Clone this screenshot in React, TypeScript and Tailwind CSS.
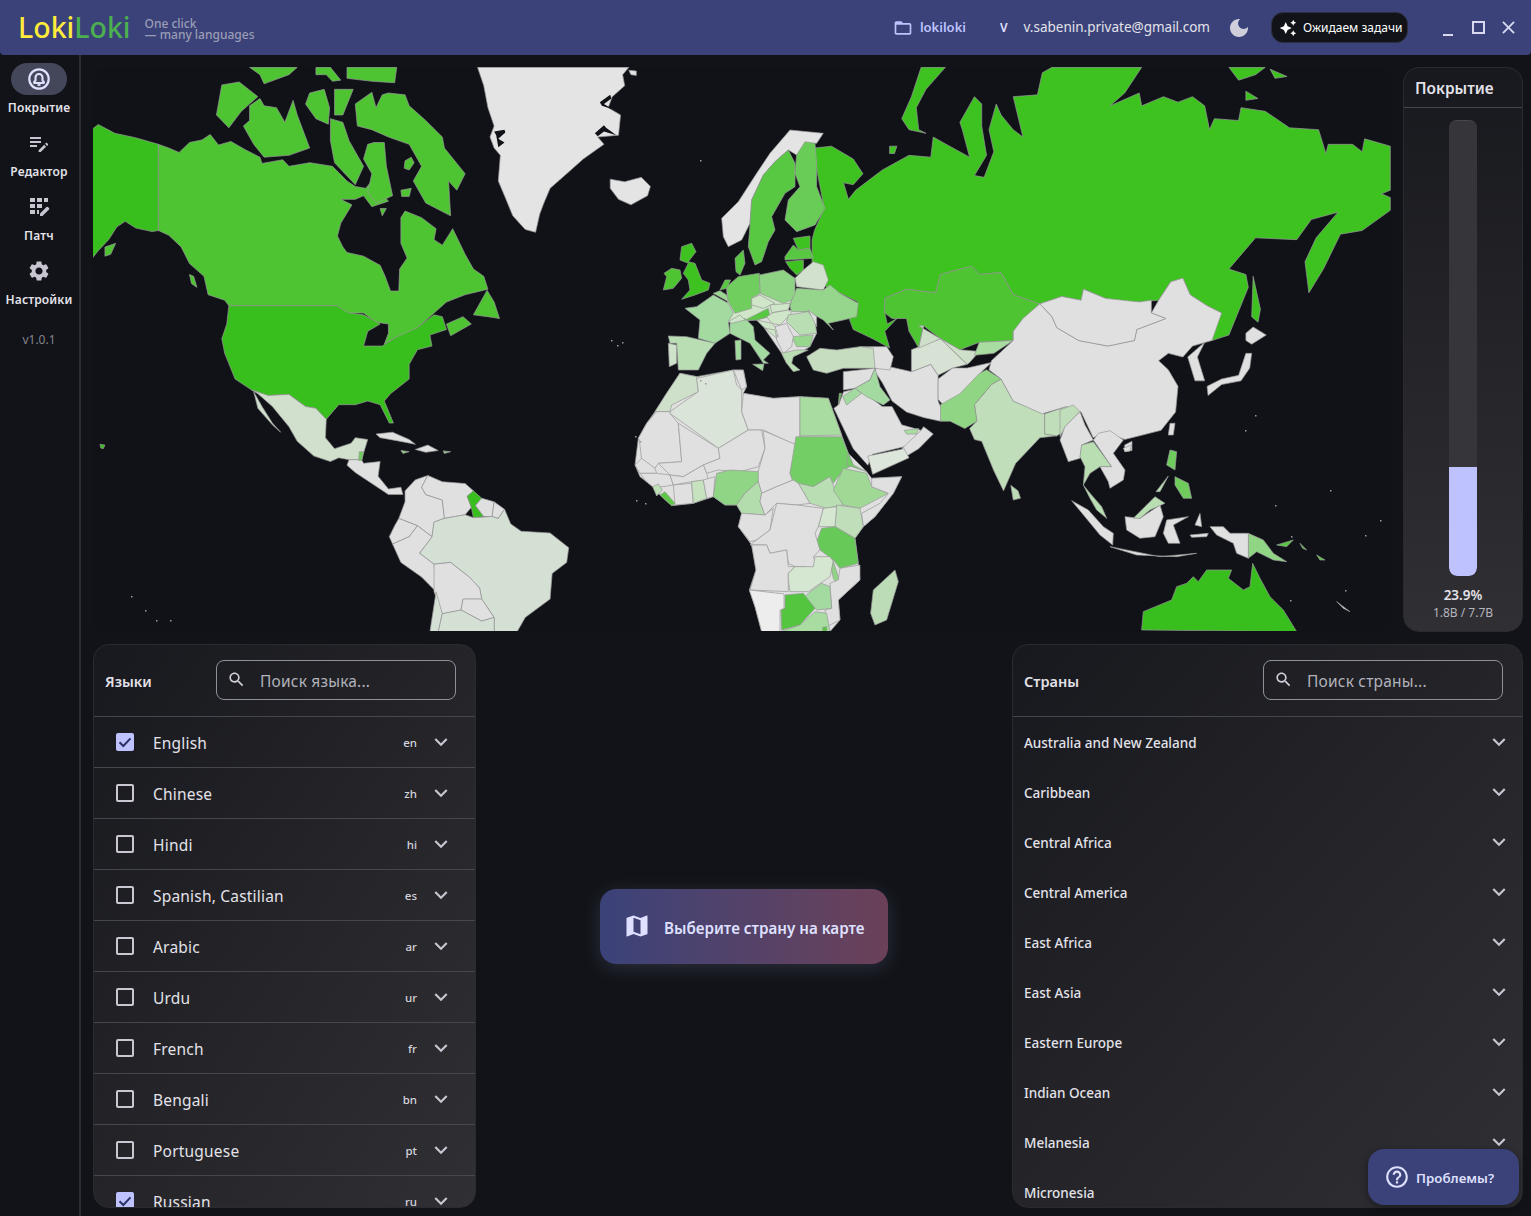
import React from "react";

type Shape = [string, string];
const R = "#3dc220", US = "#38be1d", CA = "#4ec432", G = "#e0e0e0", P = "#d5e0d5", DARK = "#101218";

const Z7: Shape[] = [
  [US, "6,188 20,176 60,200 110,212 165,230 165,465 150,468 110,458 85,440 65,455 45,490 20,520 6,540"],
  [CA, "165,230 190,240 215,252 240,225 270,218 290,203 310,232 340,222 375,245 410,265 415,282 465,272 480,290 530,280 585,290 620,330 640,345 665,350 680,330 690,345 720,385 680,400 660,370 640,380 605,380 632,395 605,445 597,480 610,510 620,525 660,535 700,560 712,590 725,630 745,630 747,570 765,540 750,500 750,430 760,412 800,430 835,460 830,490 850,505 875,460 905,530 925,570 950,590 960,625 905,640 860,660 830,690 790,730 770,745 740,755 710,775 720,745 720,720 690,715 660,690 620,690 595,670 335,670 325,655 285,640 275,590 240,555 220,510 190,478 165,465"],
  [CA, "958,628 925,695 960,700 988,705 975,660"],
  [CA, "860,720 900,700 920,720 870,752"],
  [CA, "720,90 760,95 770,125 810,165 850,210 855,240 905,310 885,355 865,330 870,425 810,390 780,330 800,290 770,230 720,210 680,190 645,180 640,120 680,88 690,130 705,95"],
  [CA, "385,125 410,105 420,125 450,130 470,170 490,110 500,150 530,240 480,260 420,265 395,230 370,180 385,165"],
  [CA, "318,68 360,60 405,100 365,140 335,185 305,150"],
  [CA, "530,90 565,80 578,130 575,175 545,160 520,120"],
  [CA, "590,80 635,80 610,150 590,150"],
  [CA, "385,20 500,20 480,40 420,65 410,40"],
  [CA, "545,20 580,20 605,55 585,58 570,40 545,40"],
  [CA, "620,20 740,20 735,62 680,58 620,50"],
  [CA, "580,160 610,170 625,220 660,290 640,340 590,280 580,220"],
  [CA, "685,225 710,225 715,290 730,370 690,390 670,360 680,310 660,270 670,230"],
  [CA, "760,275 775,265 782,280 770,300 758,295"],
  [CA, "750,355 775,350 770,372 752,372"],
  [CA, "700,405 715,405 705,425"],
  [CA, "240,585 250,590 258,620 245,610"],
  [CA, "36,510 62,500 50,530 36,535"],
  [US, "335,670 595,670 625,690 660,695 700,720 670,740 660,780 705,780 740,755 790,730 830,695 850,700 860,735 820,750 825,780 790,790 770,830 770,870 725,910 710,930 732,990 722,990 700,940 670,930 640,940 600,940 570,980 545,950 520,945 480,912 430,915 390,900 350,870 325,800 318,760 330,720"],
  ["#e4e4e4", "935,20 1300,20 1285,40 1290,70 1260,100 1250,130 1280,150 1275,205 1225,210 1240,230 1190,270 1150,310 1110,350 1095,390 1085,420 1075,470 1050,462 1020,425 1000,370 985,330 990,260 975,240 965,210 975,180 960,130 950,70"],
  [DARK, "1218,200 1240,178 1245,185 1270,205 1240,195 1225,208"],
  [DARK, "1230,115 1255,95 1258,105 1240,120 1262,135 1235,125"],
  [DARK, "975,195 1000,190 1002,198 985,215 1000,225 985,238 980,205"],
  ["#e4e4e4", "1300,28 1318,30 1318,42 1305,40"],
  ["#e4e4e4", "1255,325 1290,332 1330,320 1352,345 1345,370 1305,395 1275,380 1255,350"],
  [US, "24,1048 36,1050 32,1060 26,1058"],
  [G, "690,1020 730,1015 770,1035 785,1048 740,1038 700,1030"],
  [G, "785,1062 815,1050 840,1065 810,1070"],
  ["#8fd583", "750,1065 770,1068 755,1073"],
  ["#8fd583", "852,1066 870,1068 855,1073"],
  ["#d0e0cc", "390,900 430,915 480,912 520,945 545,950 570,980 568,1030 590,1060 630,1045 640,1030 670,1035 655,1090 625,1090 600,1085 580,1095 540,1080 500,1040 480,1000 440,945 405,910"],
  ["#d0e0cc", "395,905 415,945 440,990 460,1015 440,995 405,950"],
  [G, "625,1090 655,1090 660,1100 700,1095 695,1135 720,1170 750,1165 755,1185 720,1185 680,1155 640,1125 620,1105"],
  ["#6fcc5c", "650,1068 660,1068 656,1092 648,1092"],
  [G, "760,1175 785,1145 815,1133 800,1165 810,1185 850,1200 855,1250 830,1260 825,1300 790,1270 745,1250 760,1205"],
  [G, "815,1133 850,1150 905,1155 925,1175 910,1190 920,1220 905,1240 855,1250 850,1200 810,1185 800,1165"],
  [US, "925,1175 945,1195 930,1215 950,1245 925,1248 920,1220 910,1190"],
  [G, "945,1195 975,1205 970,1245 950,1245 930,1215"],
  [G, "975,1205 1000,1225 985,1250 970,1245"],
  [P, "855,1250 905,1240 925,1248 970,1245 985,1250 1000,1225 1015,1265 1040,1285 1110,1290 1155,1330 1150,1370 1115,1400 1110,1470 1050,1520 1030,1560 975,1560 975,1520 945,1470 940,1440 915,1410 870,1370 830,1375 795,1345 825,1300 830,1260"],
  [G, "745,1250 790,1270 770,1300 730,1320 722,1300 735,1270"],
  [G, "730,1320 770,1300 790,1270 825,1300 795,1345 830,1375 835,1450 800,1410 750,1370"],
  [G, "830,1375 870,1370 915,1410 940,1440 945,1470 900,1470 895,1500 850,1510 830,1450"],
  [G, "900,1470 945,1470 975,1520 945,1530 895,1500"],
  [P, "835,1450 850,1510 840,1560 820,1560"],
  [P, "850,1510 895,1500 945,1530 975,1520 975,1560 840,1560"],
];

const Z8: Shape[] = [
  [R, "360,240 395,235 440,270 460,310 440,340 420,335 430,380 445,355 480,320 500,300 555,260 600,265 605,210 625,225 680,265 665,190 660,170 690,100 705,120 705,180 715,260 690,315 710,320 730,250 720,190 735,120 745,150 770,190 790,210 770,100 820,95 830,35 850,20 1035,20 1000,90 970,125 1030,90 1035,125 1080,100 1110,115 1140,100 1165,125 1175,190 1185,160 1235,165 1240,130 1290,140 1340,185 1400,190 1415,255 1420,230 1470,230 1490,250 1495,215 1548,235 1548,355 1530,365 1548,375 1548,410 1490,465 1445,475 1410,570 1380,635 1372,550 1395,485 1440,415 1385,435 1355,490 1270,485 1215,570 1250,585 1255,620 1215,750 1180,765 1180,730 1200,690 1170,670 1135,640 1120,595 1095,605 1070,655 1030,660 990,660 960,650 915,625 910,655 870,645 825,665 770,640 745,580 700,585 685,562 620,585 610,635 550,625 505,650 505,690 510,720 530,705 505,740 515,785 480,760 440,735 430,700 450,660 420,640 385,620 355,555 355,490 360,465 380,405 365,300"],
  [R, "580,20 630,20 590,80 570,130 575,190 590,200 555,190 540,160 560,100"],
  [R, "1215,20 1290,20 1270,40 1235,55"],
  [R, "1300,25 1335,45 1310,50"],
  [R, "1250,85 1275,105 1250,110"],
  [R, "1265,590 1280,680 1275,715 1262,700"],
  [R, "515,235 530,235 525,255 515,255"],
  [CA, "505,650 550,625 610,635 620,585 685,562 700,585 745,580 770,640 825,665 790,710 770,740 770,765 700,770 660,790 620,760 585,725 575,785 555,740 550,705 520,705 505,690"],
  [G, "490,825 510,835 560,850 600,830 615,860 615,930 625,960 620,985 585,975 550,960 520,930 500,880 485,850"],
  [G, "410,940 420,905 450,895 500,945 520,945 540,995 580,1010 560,1050 480,1075 470,1105 440,1060 400,950"],
  [G, "585,1000 605,1020 575,1060 550,1080 540,1060 580,1010"],
  ["#a8dca0", "545,1010 575,1005 570,1020 550,1020"],
  ["#dde6da", "470,1080 545,1060 555,1085 480,1130"],
  [G, "615,870 645,840 675,840 725,825 705,850 665,915 625,940 615,925"],
  ["#d7e2d4", "560,790 620,760 675,830 645,840 615,860 600,830 560,850"],
  ["#cfe0ca", "575,725 620,760 660,790 700,795 680,825 675,830 620,760 585,780 575,785 585,725"],
  ["#a8dca0", "700,770 770,765 730,800 690,805"],
  ["#c0deba", "745,870 770,930 835,965 835,1020 860,1025 825,1030 775,1100 750,1175 730,1120 705,1040 690,1035 680,1005 695,985 690,940 725,885"],
  ["#c0deba", "835,965 880,945 905,955 890,1000 860,1025 835,1020"],
  ["#8fd583", "620,940 660,910 700,855 715,845 745,870 725,885 690,940 695,985 670,1005 640,985 620,985"],
  [G, "725,820 770,765 770,740 790,705 825,665 850,700 860,730 905,765 965,780 1020,765 1025,735 1085,705 1055,690 1070,655 1095,605 1120,595 1135,640 1170,670 1200,690 1180,765 1140,780 1120,810 1090,800 1070,820 1090,845 1110,890 1105,960 1075,1010 1000,1035 960,1015 935,1030 910,960 880,945 830,965 770,930 745,870 720,845"],
  [G, "825,665 870,645 910,655 915,625 960,650 1030,660 1055,655 1055,690 1085,705 1025,735 1020,765 965,780 905,765 860,730 850,700"],
  [G, "1130,810 1165,770 1150,810 1165,875 1145,875"],
  [G, "1170,890 1200,870 1235,860 1250,800 1262,800 1258,840 1240,875 1200,885 1172,915"],
  [G, "1250,745 1265,728 1292,750 1262,775 1250,765"],
  [G, "1000,1050 1015,1040 1015,1065 1000,1068"],
  ["#bcdcb6", "765,1160 780,1175 785,1195 770,1200"],
];

const Z9: Shape[] = [
  ["#cfe6c8", "200,470 405,445 395,510 385,540 290,570 205,575"],
  [G, "290,570 385,540 445,545 470,610 450,650 400,680 380,700 365,670 310,590"],
  [G, "600,650 680,650 700,680 690,720 645,715"],
  ["#e4e4e4", "390,0 490,10 470,40 435,40 410,75 385,60 345,95 310,135 275,210 270,280 245,330 205,350 190,320 185,265 235,215 290,130 330,70"],
  ["#58c742", "385,60 405,100 405,170 375,190 335,260 345,300 325,335 305,395 285,405 265,350 270,285 275,210 310,135 345,95"],
  ["#68cc57", "410,75 435,35 465,40 470,100 470,170 495,235 465,285 410,305 375,270 385,210 420,170 405,130"],
  ["#58c742", "225,385 250,360 255,400 240,435 228,425"],
  [R, "400,325 450,318 450,355 415,360"],
  ["#58c742", "375,380 400,345 415,360 450,355 460,385 375,390"],
  [R, "377,395 430,390 430,420 410,435 390,415"],
  ["#d2e1ce", "430,420 460,395 490,405 505,450 490,480 410,470 405,445"],
  ["#96d68c", "395,510 410,475 490,480 510,465 540,490 595,520 590,560 550,570 505,580 520,600 490,570 445,545 395,545 390,530"],
  ["#8ed484", "298,435 370,420 405,445 405,490 395,510 370,520 300,490"],
  ["#70ce5e", "200,470 235,440 298,430 300,490 275,505 275,535 225,550 205,515"],
  ["#58c742", "180,480 195,450 212,450 200,475"],
  ["#9ad890", "160,490 180,482 200,495 205,515"],
  ["#a3daa0", "75,535 110,530 160,495 205,520 220,550 205,575 210,610 165,640 115,625 120,570"],
  ["#b9deb3", "25,618 80,620 165,640 140,670 115,720 55,720 50,640 30,640"],
  ["#cfe2ca", "25,640 50,645 50,700 28,710"],
  ["#a3daa0", "210,580 255,565 280,590 285,630 330,670 310,690 325,700 310,700 270,640 230,620 210,610"],
  ["#a3daa0", "225,632 243,630 243,688 228,690"],
  ["#a3daa0", "278,703 312,702 308,722"],
  ["#d0e6ca", "205,575 240,555 255,570 215,580"],
  ["#58c742", "275,560 325,535 330,560 290,570 255,570"],
  ["#cfe6c8", "275,505 300,495 345,520 310,535 275,525"],
  ["#cfe6c8", "330,525 390,520 385,540 335,548"],
  ["#cfe6c8", "320,560 340,548 385,540 395,550 360,585 335,580"],
  ["#b9deb3", "385,555 445,545 465,570 470,610 420,615 380,575"],
  [G, "445,540 470,560 470,590"],
  ["#98d78e", "395,620 460,615 450,650 410,650"],
  [G, "345,590 380,580 400,620 395,650 370,670 350,630"],
  ["#cfe6c8", "290,570 335,580 345,590 355,620 310,590"],
  ["#cfe6c8", "315,595 345,600 350,625"],
  ["#b9deb3", "365,670 410,660 445,660 400,680 395,700 420,720 400,725 380,700"],
  ["#c6ddc0", "440,680 480,655 530,660 600,650 640,655 645,715 590,715 550,715 500,730 460,720"],
  [R, "65,350 95,340 108,365 85,395 105,400 125,450 150,460 145,480 105,495 65,508 90,480 85,450 70,430 85,400 60,390"],
  ["#4ec432", "35,415 60,420 65,445 40,475 10,480 20,440 12,430"],
  [G, "550,725 645,715 630,750 585,775 550,780"],
  ["#a3daa0", "645,715 660,770 690,810 670,825 620,800 585,775 630,750"],
  ["#a3daa0", "548,800 585,775 605,790 560,825"],
  ["#58c742", "538,790 545,790 535,825"],
];

const Z10: Shape[] = [
  [G, "75,125 110,70 150,10 200,20 310,0 340,0 350,50 340,70 430,85 510,80 595,85 635,195 655,250 710,305 725,325 815,320 790,370 735,440 700,470 675,505 685,580 690,630 625,690 630,750 600,785 395,785 375,710 358,660 378,600 365,525 325,470 335,430 320,405 285,405 250,380 190,400 125,407 90,375 68,350 30,320 15,285 25,205 50,160"],
  ["#cfe0ca", "75,125 110,70 150,10 200,20 205,65 125,105 120,125"],
  ["#dbe4d8", "120,125 205,65 200,25 310,0 320,45 335,60 335,125 355,180 265,235 120,130"],
  [G, "310,0 340,0 350,50 335,60"],
  [G, "340,70 430,85 510,80 510,225 495,225 400,180 355,180 335,125"],
  ["#a8dca0", "510,80 595,85 635,195 510,198"],
  [G, "25,205 50,160 80,125 120,125 120,130 145,160 155,275 85,280 75,295 35,270 28,210"],
  [G, "145,160 265,235 270,265 220,285 160,320 120,315 85,280 155,275"],
  [G, "265,235 355,180 395,180 405,235 385,290 330,305 265,300 230,310 220,285 270,265"],
  [G, "400,182 500,225 480,310 490,330 440,350 395,370 380,320 405,235"],
  ["#74ce66", "498,200 635,200 655,250 670,285 640,300 610,340 600,320 550,350 505,340 495,355 480,310"],
  ["#b9deb3", "505,340 550,350 600,320 615,360 640,405 590,415 540,400"],
  ["#74ce66", "655,250 670,285 710,305 650,285"],
  ["#a0d996", "640,295 710,310 725,350 775,370 690,415 640,405 610,360"],
  [G, "725,325 815,320 790,370 735,440 700,470 695,430 750,400 775,370 725,350"],
  ["#c0deba", "620,405 690,415 700,470 675,505 615,470"],
  ["#d5e6d1", "580,415 620,410 615,470 565,470"],
  ["#67c957", "575,475 615,470 675,505 685,580 630,595 610,570 570,540 560,515"],
  [G, "15,285 35,265 75,295 80,310 30,310"],
  [G, "30,310 80,310 120,315 130,345 100,350 68,350 45,330"],
  [G, "160,320 220,285 230,310 235,330 185,335 130,345 120,315"],
  [G, "130,345 185,340 190,400 135,405"],
  ["#c6e2bf", "185,335 220,330 230,385 190,400"],
  [G, "220,330 255,320 250,380 230,385"],
  ["#90d585", "260,310 300,300 385,305 385,335 345,370 320,405 285,405 250,380"],
  ["#b4ddad", "385,335 395,370 390,395 405,435 335,430 320,405 345,370"],
  ["#bde0b7", "68,350 85,342 97,360 80,378"],
  ["#5cc845", "90,375 105,365 135,400 125,407"],
  [G, "395,370 440,350 490,330 505,340 540,400 500,405 440,400 405,435 390,395"],
  [G, "325,470 335,430 405,435 430,415 420,480 380,510 360,515"],
  [G, "440,400 500,405 580,415 565,470 555,490 570,540 550,560 570,610 525,590 495,590 475,580 470,540 420,550 410,525 360,525 420,480"],
  [G, "365,525 410,525 420,550 470,540 475,590 495,590 475,610 475,665 360,660 378,600"],
  ["#d5e6d1", "475,610 495,590 550,590 555,560 600,560 610,575 600,620 535,665 480,665 475,630"],
  ["#8ed484", "610,575 625,620 630,655 610,625 605,600"],
  [G, "630,595 690,585 690,630 625,690 630,750 590,770 585,720 605,715 600,640 625,630"],
  ["#a3daa0", "535,670 575,640 600,650 605,715 560,720 525,680"],
  ["#54c53e", "465,675 520,670 555,715 510,765 455,780 453,720 465,715"],
  ["#ededed", "358,660 462,672 462,715 450,720 450,785 395,785 375,710"],
  ["#a8dca0", "452,785 510,765 555,725 590,730 600,785"],
  ["#54c53e", "578,772 590,770 590,785 578,785"],
  ["#bcdcb6", "730,660 795,600 805,635 770,750 735,765 722,730"],
];

const Z11: Shape[] = [
  ["#c0deba", "0,120 40,105 60,125 15,170 0,200"],
  [G, "60,125 75,165 100,210 65,225 60,265 25,275 0,210 15,170"],
  ["#b8deb1", "65,225 100,215 155,290 120,290 90,310 70,345 75,290 60,260"],
  [G, "100,210 115,190 150,182 190,210 160,250 195,300 190,330 150,355 145,335 120,290 155,290"],
  ["#b8deb1", "70,345 90,370 125,410 140,445 110,420 90,385"],
  [G, "35,392 85,420 130,470 160,490 158,525 120,495"],
  [G, "195,440 240,445 300,405 310,440 285,500 240,505 200,480"],
  ["#b8deb1", "220,445 285,380 315,400 270,420 240,445"],
  [G, "150,530 240,548 300,560 410,550 350,560 230,555"],
  [G, "310,490 320,450 385,440 340,465 360,520 325,520"],
  [G, "390,495 445,490 440,500 395,502"],
  [G, "405,465 420,430 425,470"],
  ["#8fd583", "565,490 610,510 640,550 680,575 640,570 590,545 565,565"],
  [G, "450,470 490,470 510,490 565,490 565,565 530,550 520,520 470,495"],
  ["#58c742", "650,525 700,510 680,530"],
  ["#6fcc5c", "330,240 350,245 345,300 320,285"],
  ["#6fcc5c", "345,320 385,340 395,385 370,385 345,345"],
  ["#b8deb1", "288,365 325,318 300,365"],
  [US, "245,780 250,725 335,690 350,650 380,640 400,620 415,635 440,600 515,600 505,625 550,660 570,650 578,580 600,625 630,680 670,720 710,785"],
  [G, "325,195 330,160 345,160 340,195"],
  [G, "190,235 215,225 210,243 195,245"],
  [G, "830,695 870,725 850,715"],
  ["#58c742", "720,520 740,540 728,535"],
  ["#58c742", "770,555 795,570 780,570"],
];

const dots: [number, number][] = [[611,340],[617,345],[622,342],[635,436],[640,441],[636,500],[645,503],[700,380],[705,383],[1291,536],[1245,430],[1255,415],[1290,600],[1345,590],[1275,505],[1330,490],[1365,535],[1380,520],[700,160],[131,596],[145,610],[156,620],[170,620],[181,632]];

const MapSvg = () => (
  <svg viewBox="93 67 1298 564" className="block h-[564px] w-[1298px]">
    {([
      ["translate(90 60) scale(0.4145 0.3667)", Z7],
      ["translate(640 60) scale(0.4847 0.3667)", Z8],
      ["translate(630 370) scale(0.3333)", Z10],
      ["translate(1060 370) scale(0.3333)", Z11],
      ["translate(660 130) scale(0.3333)", Z9],
    ] as [string, Shape[]][]).map(([t, list], i) => (
      <g key={i} transform={t}>
        {list.map(([fill, pts], j) => (
          <polygon key={j} points={pts} fill={fill} stroke={fill === DARK ? "none" : "#9a9a9a"} strokeWidth={0.7} vectorEffect="non-scaling-stroke" strokeLinejoin="round" />
        ))}
      </g>
    ))}
    {dots.map(([x, y], i) => (
      <rect key={i} x={x} y={y} width={1.5} height={1.5} fill="#9a9a9a" />
    ))}
  </svg>
);

const Mui = ({ d, className }: { d: string; className: string }) => (
  <svg viewBox="0 0 24 24" className={className} fill="currentColor"><path d={d} /></svg>
);

const P_CHEV = "M16.59 8.59 12 13.17 7.41 8.59 6 10l6 6 6-6z";
const P_SEARCH = "M15.5 14h-.79l-.28-.27C15.41 12.59 16 11.11 16 9.5 16 5.91 13.09 3 9.5 3S3 5.91 3 9.5 5.91 16 9.5 16c1.61 0 3.09-.59 4.23-1.57l.27.28v.79l5 4.99L20.49 19l-4.99-5zm-6 0C7.01 14 5 11.99 5 9.5S7.01 5 9.5 5 14 7.01 14 9.5 11.99 14 9.5 14z";
const P_GEAR = "M19.14 12.94c.04-.3.06-.61.06-.94 0-.32-.02-.64-.07-.94l2.03-1.58c.18-.14.23-.41.12-.61l-1.92-3.32c-.12-.22-.37-.29-.59-.22l-2.39.96c-.5-.38-1.03-.7-1.62-.94l-.36-2.54c-.04-.24-.24-.41-.48-.41h-3.84c-.24 0-.43.17-.47.41l-.36 2.54c-.59.24-1.13.57-1.62.94l-2.39-.96c-.22-.08-.47 0-.59.22L2.74 8.87c-.12.21-.08.47.12.61l2.03 1.58c-.05.3-.09.63-.09.94s.02.64.07.94l-2.03 1.58c-.18.14-.23.41-.12.61l1.92 3.32c.12.22.37.29.59.22l2.39-.96c.5.38 1.03.7 1.62.94l.36 2.54c.05.24.24.41.48.41h3.84c.24 0 .44-.17.47-.41l.36-2.54c.59-.24 1.13-.56 1.62-.94l2.39.96c.22.08.47 0 .59-.22l1.92-3.32c.12-.22.07-.47-.12-.61l-2.01-1.58zM12 15.6c-1.98 0-3.6-1.62-3.6-3.6s1.62-3.6 3.6-3.6 3.6 1.62 3.6 3.6-1.62 3.6-3.6 3.6z";
const P_EDITNOTE = "M3 10h11v2H3v-2zm0-2h11V6H3v2zm0 8h7v-2H3v2zm15.01-3.13.71-.71c.39-.39 1.02-.39 1.41 0l.71.71c.39.39.39 1.02 0 1.41l-.71.71-2.12-2.12zm-1.06 1.06-5.3 5.3V21h2.12l5.3-5.3-2.12-2.12z";
const P_MAP = "M20.5 3l-.16.03L15 5.1 9 3 3.36 4.9c-.21.07-.36.25-.36.48V20.5c0 .28.22.5.5.5l.16-.03L9 18.9l6 2.1 5.64-1.9c.21-.07.36-.25.36-.48V3.5c0-.28-.22-.5-.5-.5zM15 19l-6-2.11V5l6 2.11V19z";
const P_HELP = "M11 18h2v-2h-2v2zm1-16C6.48 2 2 6.48 2 12s4.48 10 10 10 10-4.48 10-10S17.52 2 12 2zm0 18c-4.41 0-8-3.59-8-8s3.59-8 8-8 8 3.59 8 8-3.59 8-8 8zm0-14c-2.21 0-4 1.79-4 4h2c0-1.1.9-2 2-2s2 .9 2 2c0 2-3 1.75-3 5h2c0-2.25 3-2.5 3-5 0-2.21-1.79-4-4-4z";
const P_FOLDER = "M20 6h-8l-2-2H4c-1.1 0-1.99.9-1.99 2L2 18c0 1.1.9 2 2 2h16c1.1 0 2-.9 2-2V8c0-1.1-.9-2-2-2zm0 12H4V8h16v10z";
const P_MOON = "M12 3c-4.97 0-9 4.03-9 9s4.03 9 9 9 9-4.03 9-9c0-.46-.04-.92-.1-1.36-.98 1.37-2.58 2.26-4.4 2.26-2.98 0-5.4-2.42-5.4-5.4 0-1.81.89-3.42 2.26-4.4-.44-.06-.9-.1-1.36-.1z";
const P_STARS = "m19 9 1.25-2.75L23 5l-2.75-1.25L19 1l-1.25 2.75L15 5l2.75 1.25L19 9zm-7.5.5L9 4 6.5 9.5 1 12l5.5 2.5L9 20l2.5-5.5L17 12l-5.5-2.5zM19 15l-1.25 2.75L15 19l2.75 1.25L19 23l1.25-2.75L23 19l-2.75-1.25L19 15z";

const BellCircle = () => (
  <svg viewBox="0 0 24 24" className="h-6 w-6 text-[#e0e0ff]" fill="none" stroke="currentColor">
    <circle cx="12" cy="12" r="9.7" strokeWidth="2.2" />
    <path d="M7.2 16v-1.2l1.3-1.3v-3a3.5 3.5 0 0 1 7 0v3l1.3 1.3V16z" strokeWidth="2.1" strokeLinejoin="round" />
    <path d="M10.5 18h3" strokeWidth="1.8" />
  </svg>
);

const PatchIcon = () => (
  <svg viewBox="0 0 24 24" className="h-6 w-6" fill="currentColor">
    <path d="M3 3h5v4H3zM10 3h5v4h-5zM17 3h4v4h-4zM3 9h5v4H3zM10 9h5v4h-5zM3 15h5v4H3zM10 15h2v4h-2z" />
    <path d="M13 21v-2.5l6.5-6.5a1 1 0 0 1 1.4 0l1.1 1.1a1 1 0 0 1 0 1.4L15.5 21z" />
  </svg>
);

const Nav = ({ icon, label, active }: { icon: React.ReactNode; label: string; active?: boolean }) => (
  <div className="flex h-16 w-full flex-col items-center">
    <div className={`flex h-8 w-14 items-center justify-center rounded-2xl text-[#c6c5d0] ${active ? "bg-[#44465a]" : ""}`}>{icon}</div>
    <div className="mt-[3px] text-[12px] leading-5 font-semibold tracking-[0.15px] whitespace-nowrap text-[#e3e2e9]">{label}</div>
  </div>
);

const langs: [string, string, boolean][] = [
  ["English", "en", true], ["Chinese", "zh", false], ["Hindi", "hi", false], ["Spanish, Castilian", "es", false],
  ["Arabic", "ar", false], ["Urdu", "ur", false], ["French", "fr", false], ["Bengali", "bn", false],
  ["Portuguese", "pt", false], ["Russian", "ru", true],
];
const regions = ["Australia and New Zealand", "Caribbean", "Central Africa", "Central America", "East Africa", "East Asia", "Eastern Europe", "Indian Ocean", "Melanesia", "Micronesia"];

const PanelHead = ({ title, ph }: { title: string; ph: string }) => (
  <div className="flex h-[72px] shrink-0 items-center justify-between border-b border-[#46464f] pr-[19px] pl-[11px]">
    <div className="pt-[3px] text-[14.5px] font-semibold text-[#e3e2e9]">{title}</div>
    <div className="mb-[2px] flex h-10 w-[240px] items-center rounded-lg border border-[#8f909a] pl-[10px]">
      <Mui d={P_SEARCH} className="h-[19px] w-[19px] shrink-0 text-[#d0cfd9]" />
      <span className="ml-[14px] pt-[4px] text-[15.5px] tracking-[0.2px] text-[#b2b2bb]">{ph}</span>
    </div>
  </div>
);

export default function App() {
  return (
    <div className="relative flex h-screen w-screen flex-col overflow-hidden bg-[#111318] font-['Noto_Sans',sans-serif]">
      <header className="flex h-[55px] shrink-0 items-center rounded-b-[4px] bg-[#3a4279] pr-4 pl-[18px]">
        <div className="shrink-0 text-[28.5px] leading-none font-medium">
          <span className="text-[#ffeb3b]">Loki</span><span className="text-[#4caf50]">Loki</span>
        </div>
        <div className="mt-[3px] ml-[14px] shrink-0 text-[12px] leading-[11px] font-medium whitespace-nowrap text-[#9a9db5]">
          <div>One click</div>
          <div>— many languages</div>
        </div>
        <Mui d={P_FOLDER} className="ml-auto h-[20px] w-[20px] text-[#bec2ff]" />
        <span className="ml-[7px] text-[13px] font-semibold text-[#bec2ff]">lokiloki</span>
        <span className="ml-[34px] text-[12px] font-semibold text-[#e0e0ff]">V</span>
        <span className="ml-[16px] text-[13.5px] text-[#e3e2e9]">v.sabenin.private@gmail.com</span>
        <Mui d={P_MOON} className="ml-[17px] h-[24px] w-[24px] text-[#cfcfdc]" />
        <div className="ml-[20px] flex h-[31px] w-[137px] items-center gap-[6px] rounded-[12px] border border-[#2e3040] bg-[#111318] pl-[7px]">
          <Mui d={P_STARS} className="h-[18px] w-[18px] text-white" />
          <span className="text-[12px] text-white">Ожидаем задачи</span>
        </div>
        <div className="ml-[35px] flex items-center text-[#e0e0ff]">
          <span className="mt-[14px] h-[2px] w-[10px] bg-[#d8d8f0]" />
          <span className="ml-[19px] h-[13px] w-[13px] border-2 border-[#d8d8f0]" />
          <svg viewBox="0 0 14 14" className="ml-[17px] h-[13px] w-[13px]" stroke="#d8d8f0" strokeWidth="2"><path d="M1 1l12 12M13 1L1 13" /></svg>
        </div>
      </header>

      <div className="flex min-h-0 flex-1">
        <aside className="flex w-[81px] shrink-0 flex-col items-center border-r-2 border-[#2a2c31] pt-2 pr-[1px]">
          <Nav icon={<BellCircle />} label="Покрытие" active />
          <Nav icon={<Mui d={P_EDITNOTE} className="h-6 w-6" />} label="Редактор" />
          <Nav icon={<PatchIcon />} label="Патч" />
          <Nav icon={<Mui d={P_GEAR} className="h-6 w-6" />} label="Настройки" />
          <div className="mt-[12px] text-[12px] text-[#85858f]">v1.0.1</div>
        </aside>

        <main className="flex min-w-0 flex-1 flex-col gap-3 pt-3 pr-2 pb-2 pl-3">
          <div className="flex h-[565px] shrink-0 gap-3">
            <div className="flex-1 overflow-hidden rounded-2xl bg-[#101218]"><MapSvg /></div>
            <div className="flex w-[120px] flex-col rounded-2xl border border-[#2a2b30] bg-gradient-to-b from-[#18191e] to-[#302f34]">
              <div className="flex h-[40px] shrink-0 items-center border-b border-[#46464f] pt-[2px] pl-[11px] text-[15.4px] font-semibold text-[#e3e2e9]">Покрытие</div>
              <div className="flex flex-1 flex-col items-center pt-3 pb-2">
                <div className="flex h-[456px] w-7 flex-col justify-end overflow-hidden rounded-lg border-t border-[#46464f] bg-[#36353a]">
                  <div className="h-[109px] rounded-b-lg bg-[#bec2ff]" />
                </div>
                <div className="mt-[9px] text-[13.5px] leading-5 font-semibold text-[#e3e2e9]">23.9%</div>
                <div className="text-[12px] leading-4 text-[#b5b5bd]">1.8B / 7.7B</div>
              </div>
            </div>
          </div>

          <div className="flex min-h-0 flex-1 gap-3">
            <section className="flex w-[383px] shrink-0 flex-col overflow-hidden rounded-2xl border border-[#2a2b30] bg-gradient-to-br from-[#18191e] to-[#302f34]">
              <PanelHead title="Языки" ph="Поиск языка..." />
              <div className="min-h-0 flex-1 overflow-hidden">
                {langs.map(([n, c, on]) => (
                  <div key={c} className="flex h-[51px] shrink-0 items-center border-b border-[#46464f] pr-[21px] pl-[22px]">
                    {on ? (
                      <span className="flex h-[18px] w-[18px] items-center justify-center rounded-[2px] bg-[#bec2ff]">
                        <svg viewBox="0 0 18 18" className="h-[18px] w-[18px]" fill="none" stroke="#2b3162" strokeWidth="2"><path d="M3.5 9.3l3.8 3.7 7.2-7.6" /></svg>
                      </span>
                    ) : (
                      <span className="h-[18px] w-[18px] rounded-[2px] border-2 border-[#c9c8d2]" />
                    )}
                    <span className="ml-[19px] flex-1 pt-[4px] text-[15.5px] tracking-[0.2px] text-[#e3e2e9]">{n}</span>
                    <span className="mr-[11px] pt-[1px] text-[11.5px] font-medium text-[#d4d3dc]">{c}</span>
                    <Mui d={P_CHEV} className="h-[26px] w-[26px] text-[#c6c5d0]" />
                  </div>
                ))}
              </div>
            </section>

            <div className="flex min-w-0 flex-1 items-center justify-center">
              <div className="flex h-[75px] w-[288px] items-center gap-[13px] rounded-2xl bg-gradient-to-r from-[#3a4279] to-[#6b4058] pl-[23px] text-[#dfe0ff] shadow-[0_4px_20px_rgba(190,194,255,0.16)]">
                <Mui d={P_MAP} className="h-[28px] w-[28px]" />
                <span className="pt-[4px] text-[15.2px] font-semibold whitespace-nowrap">Выберите страну на карте</span>
              </div>
            </div>

            <section className="flex w-[511px] shrink-0 flex-col overflow-hidden rounded-2xl border border-[#2a2b30] bg-gradient-to-br from-[#18191e] to-[#302f34]">
              <PanelHead title="Страны" ph="Поиск страны..." />
              <div className="min-h-0 flex-1 overflow-hidden">
                {regions.map((r) => (
                  <div key={r} className="flex h-[50px] items-center justify-between pr-[10px] pl-[11px]">
                    <span className="pt-[2px] text-[13.5px] font-medium text-[#e3e2e9]">{r}</span>
                    <Mui d={P_CHEV} className="h-[26px] w-[26px] text-[#c6c5d0]" />
                  </div>
                ))}
              </div>
            </section>
          </div>
        </main>
      </div>

      <div className="absolute right-3 bottom-[11px] flex h-[56px] w-[151px] items-center gap-[6px] rounded-2xl bg-[#3a4279] pl-[16px] text-[#dfe0ff] shadow-[0_3px_8px_rgba(0,0,0,0.4)]">
        <Mui d={P_HELP} className="h-[26px] w-[26px]" />
        <span className="pt-[3px] text-[13.3px] font-semibold">Проблемы?</span>
      </div>
    </div>
  );
}
